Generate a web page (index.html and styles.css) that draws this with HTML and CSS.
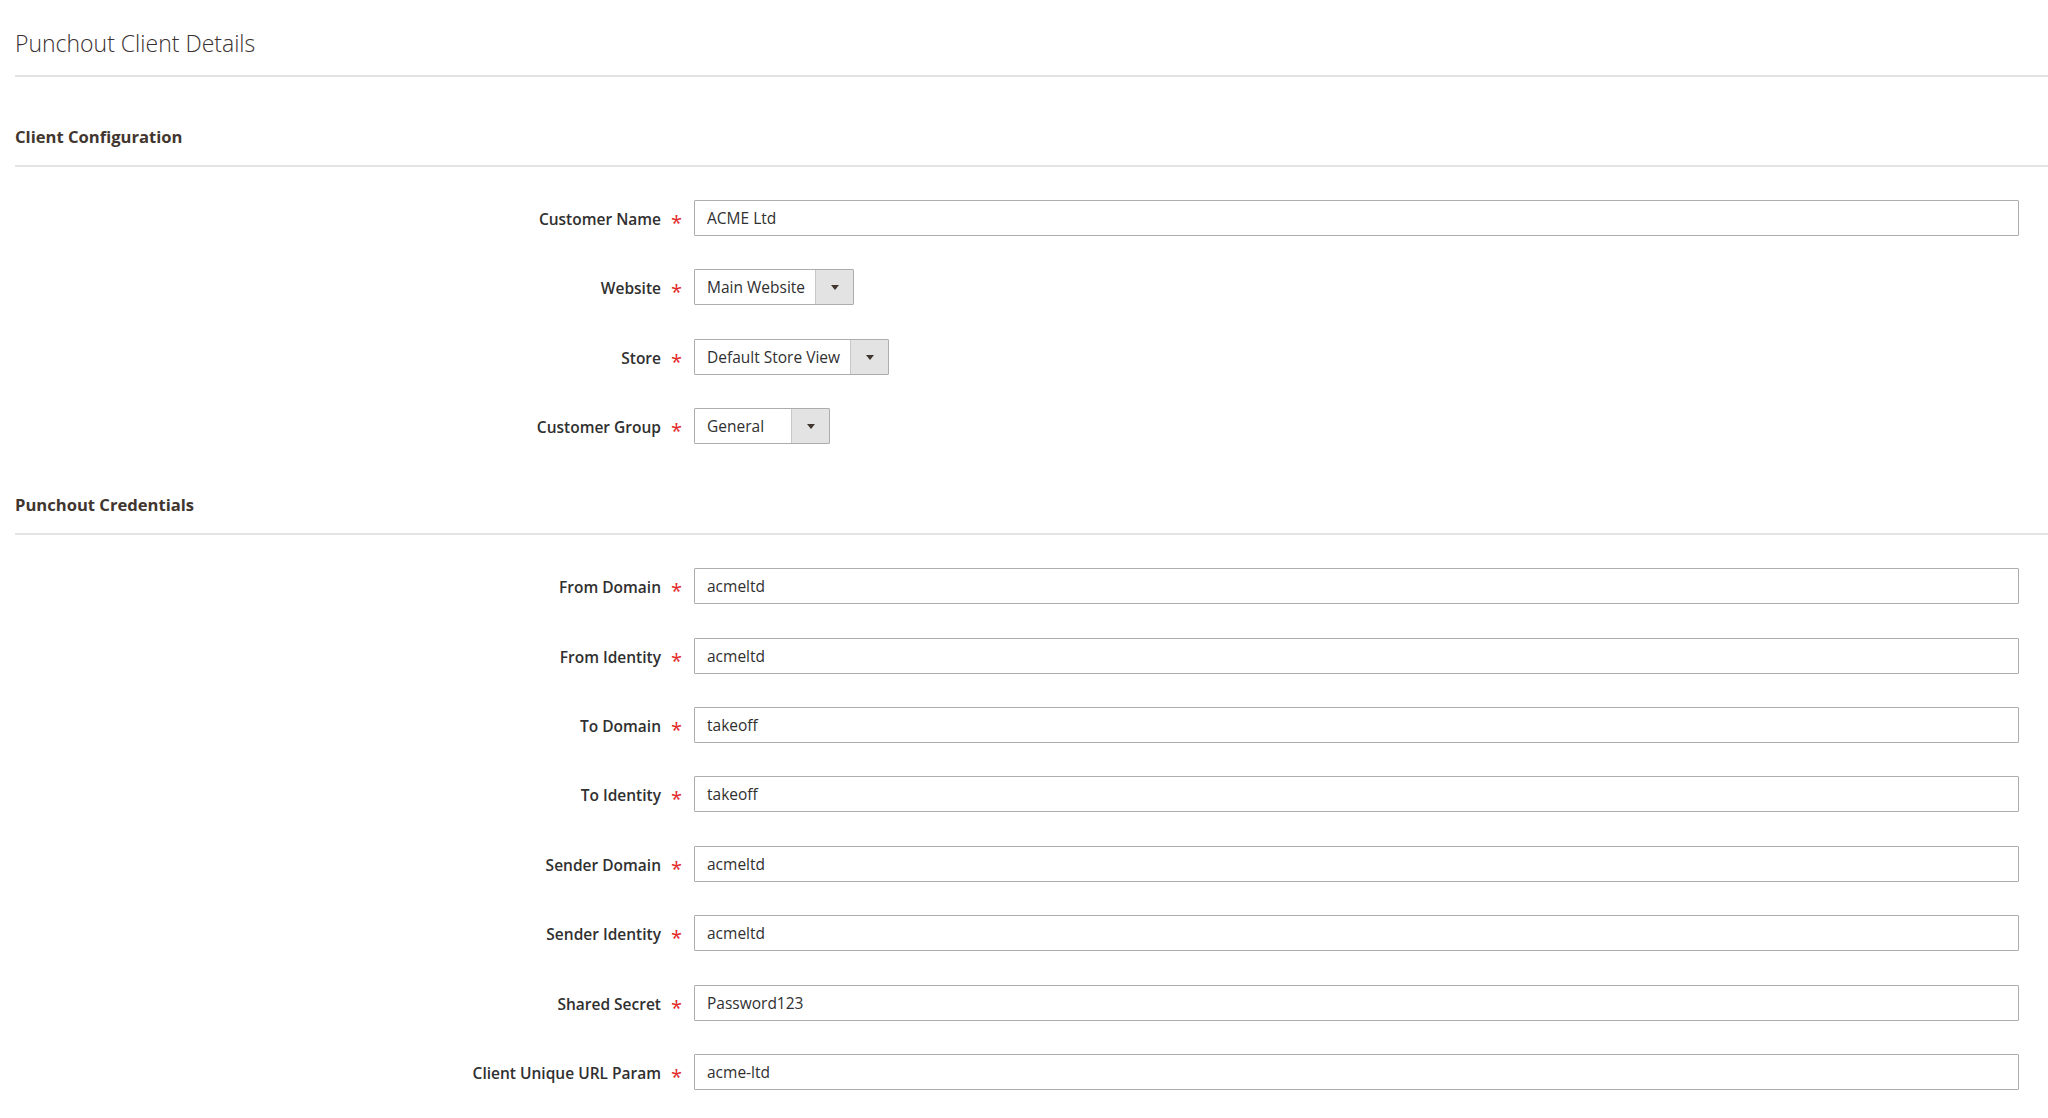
FILE: index.html
```html
<!DOCTYPE html>
<html>
    <head>
        <title>Punchout Client Details</title>
        <link rel="stylesheet" href="styles.css">
    </head>
    <body>
        <div class="page">
            <h1 class="page-title">Punchout Client Details</h1>

            <div class="fieldset">
                <h2 class="fieldset-title">Client Configuration</h2>
                <div class="field">
                    <label class="field-label required">Customer Name</label>
                    <input class="input-text" type="text" value="ACME Ltd" />
                </div>
                <div class="field">
                    <label class="field-label required">Website</label>
                    <div class="control">
                        <span class="select-wrap">
                            <select class="select"><option>Main Website</option></select>
                        </span>
                    </div>
                </div>
                <div class="field">
                    <label class="field-label required">Store</label>
                    <div class="control">
                        <span class="select-wrap">
                            <select class="select"><option>Default Store View</option></select>
                        </span>
                    </div>
                </div>
                <div class="field">
                    <label class="field-label required">Customer Group</label>
                    <div class="control">
                        <span class="select-wrap">
                            <select class="select">
                                <option>General</option>
                                <option>Wholesale</option>
                                <option>Retailer</option>
                            </select>
                        </span>
                    </div>
                </div>
            </div>

            <div class="fieldset">
                <h2 class="fieldset-title">Punchout Credentials</h2>
                <div class="field">
                    <label class="field-label required">From Domain</label>
                    <input class="input-text" type="text" value="acmeltd" />
                </div>
                <div class="field">
                    <label class="field-label required">From Identity</label>
                    <input class="input-text" type="text" value="acmeltd" />
                </div>
                <div class="field">
                    <label class="field-label required">To Domain</label>
                    <input class="input-text" type="text" value="takeoff" />
                </div>
                <div class="field">
                    <label class="field-label required">To Identity</label>
                    <input class="input-text" type="text" value="takeoff" />
                </div>
                <div class="field">
                    <label class="field-label required">Sender Domain</label>
                    <input class="input-text" type="text" value="acmeltd" />
                </div>
                <div class="field">
                    <label class="field-label required">Sender Identity</label>
                    <input class="input-text" type="text" value="acmeltd" />
                </div>
                <div class="field">
                    <label class="field-label required">Shared Secret</label>
                    <input class="input-text" type="text" value="Password123" />
                </div>
                <div class="field">
                    <label class="field-label required">Client Unique URL Param</label>
                    <input class="input-text" type="text" value="acme-ltd" />
                </div>
            </div>
        </div>
    </body>
</html>
```

FILE: styles.css
```css
* {
    box-sizing: border-box;
    margin: 0;
    padding: 0;
    font-family: 'Open Sans', 'Liberation Sans', sans-serif;
    }

    body {
    background: #ffffff;
    color: #303030;
    overflow: hidden;
    }

    .page {
    padding-left: 15px;
    }

    .page-title {
    font-size: 23px;
    font-weight: 300;
    line-height: 32px;
    color: #3a3130;
    padding-top: 27px;
    padding-bottom: 16px;
    border-bottom: 2px solid #e3e3e3;
    }

    .fieldset {
    margin-top: 47.5px;
    }

    .fieldset + .fieldset {
    margin-top: 48.5px;
    }

    .fieldset-title {
    font-size: 16.6px;
    font-weight: 700;
    line-height: 24px;
    color: #41362f;
    padding-bottom: 16px;
    border-bottom: 2px solid #e3e3e3;
    margin-bottom: 33.5px;
    }

    .field {
    display: grid;
    grid-template-columns: 679px 1fr;
    align-items: center;
    margin-right: 29px;
    margin-bottom: 33.4px;
    }

    .field:last-child {
    margin-bottom: 0;
    }

    .field-label {
    font-size: 15.5px;
    font-weight: 600;
    color: #303030;
    text-align: right;
    padding-right: 12px;
    padding-top: 5px;
    white-space: nowrap;
    }

    .field-label.required::after {
    content: '*';
    color: #e22626;
    font-size: 20px;
    font-weight: 400;
    margin-left: 10px;
    vertical-align: -5px;
    line-height: 1;
    }

    .input-text {
    height: 36px;
    width: 100%;
    border: 1px solid #adadad;
    border-radius: 1px;
    padding: 0 12px;
    font-size: 15.5px;
    color: #303030;
    background: #ffffff;
    outline: none;
    }

    .control {
    display: flex;
    }

    .select-wrap {
    display: inline-block;
    position: relative;
    }

    .select-wrap::after {
    content: '';
    position: absolute;
    right: 15px;
    top: 50%;
    margin-top: -2px;
    border-left: 4px solid transparent;
    border-right: 4px solid transparent;
    border-top: 5px solid #41362f;
    pointer-events: none;
    }

    .select {
    appearance: none;
    -webkit-appearance: none;
    height: 36px;
    border: 1px solid #adadad;
    border-radius: 1px;
    padding: 0 47px 0 12px;
    font-size: 15.5px;
    color: #303030;
    outline: none;
    background:
        linear-gradient(#c8c8c8, #c8c8c8) right 37px top 0 / 1px 100% no-repeat,
        linear-gradient(#e3e3e3, #e3e3e3) right top / 37px 100% no-repeat,
        #ffffff;
    }
```
